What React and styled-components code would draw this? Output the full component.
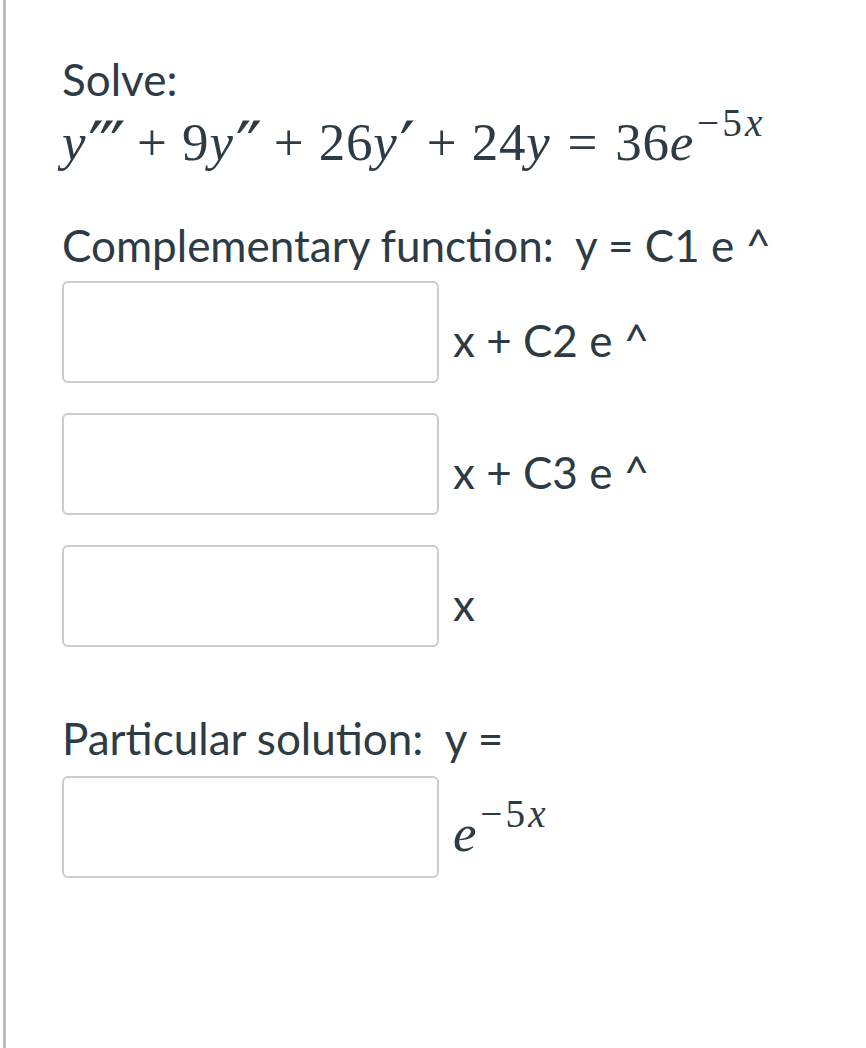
import React from "react";
import styled, { createGlobalStyle } from "styled-components";

const GlobalStyle = createGlobalStyle`
  html, body {
    margin: 0;
    padding: 0;
    background: #fff;
  }
  body {
    font-family: Lato, "Open Sans", sans-serif;
    color: #2d3b45;
  }
`;

const Page = styled.div`
  min-height: 1048px;
  box-sizing: border-box;
  margin-left: 3px;
  border-left: 3px solid #bdbdbd;
  padding: 54px 0 0 56px;
`;

const Text = styled.p`
  margin: ${(p) => p.$mt || 0}px 0 0;
  font-size: 44px;
  line-height: 50px;
  white-space: pre;
`;

const Math = styled.div`
  margin-top: ${(p) => p.$mt || 0}px;
  font-family: "Liberation Serif", "DejaVu Serif", serif;
  font-size: 53px;
  line-height: 1;
  letter-spacing: 0.015em;
  white-space: nowrap;
`;

const I = styled.span`
  font-style: italic;
`;

const Sup = styled.sup`
  font-size: 0.74em;
  line-height: 0;
  vertical-align: 0.62em;
  letter-spacing: 0.08em;
  margin-left: ${(p) => p.$ml || 0}px;
`;

const Primes = styled.span`
  font-family: "DejaVu Sans", sans-serif;
  font-size: 1.3em;
  line-height: 0;
  vertical-align: -11px;
  letter-spacing: -0.07em;
  margin-left: 2px;
  margin-right: 2px;
`;

const Op = styled.span`
  margin: 0 ${(p) => (p.$rel ? 0.32 : 0.27)}em;
`;

const Row = styled.div`
  display: flex;
  align-items: flex-start;
  margin-top: ${(p) => p.$mt}px;
`;

const Box = styled.input`
  box-sizing: border-box;
  width: 377px;
  height: 102px;
  border: 2px solid #c7cdd1;
  border-radius: 6px;
  background: #fff;
  outline: none;
  flex: none;
`;

const Label = styled.span`
  margin: 34px 0 0 14px;
  font-size: 44px;
  line-height: 50px;
  white-space: pre;
`;

const MathLabel = styled(Math)`
  margin: 31px 0 0 14px;
`;

const Prime = ({ n }) => <Primes>{"′".repeat(n)}</Primes>;

export default function App() {
  return (
    <>
      <GlobalStyle />
      <Page>
        <Text>Solve:</Text>
        <Math $mt={12}>
          <I>y</I>
          <Prime n={3} />
          <Op>+</Op>9<I>y</I>
          <Prime n={2} />
          <Op>+</Op>26<I>y</I>
          <Prime n={1} />
          <Op>+</Op>24<I>y</I>
          <Op $rel>=</Op>36<I>e</I>
          <Sup $ml={3}>
            −5<I>x</I>
          </Sup>
        </Math>
        <Text $mt={51}>{"Complementary function:  y = C1 e ^"}</Text>
        <Row $mt={11}>
          <Box />
          <Label>x + C2 e ^</Label>
        </Row>
        <Row $mt={30}>
          <Box />
          <Label>x + C3 e ^</Label>
        </Row>
        <Row $mt={30}>
          <Box />
          <Label>x</Label>
        </Row>
        <Text $mt={66}>{"Particular solution:  y ="}</Text>
        <Row $mt={13}>
          <Box />
          <MathLabel>
            <I>e</I>
            <Sup $ml={3}>
              −5<I>x</I>
            </Sup>
          </MathLabel>
        </Row>
      </Page>
    </>
  );
}
